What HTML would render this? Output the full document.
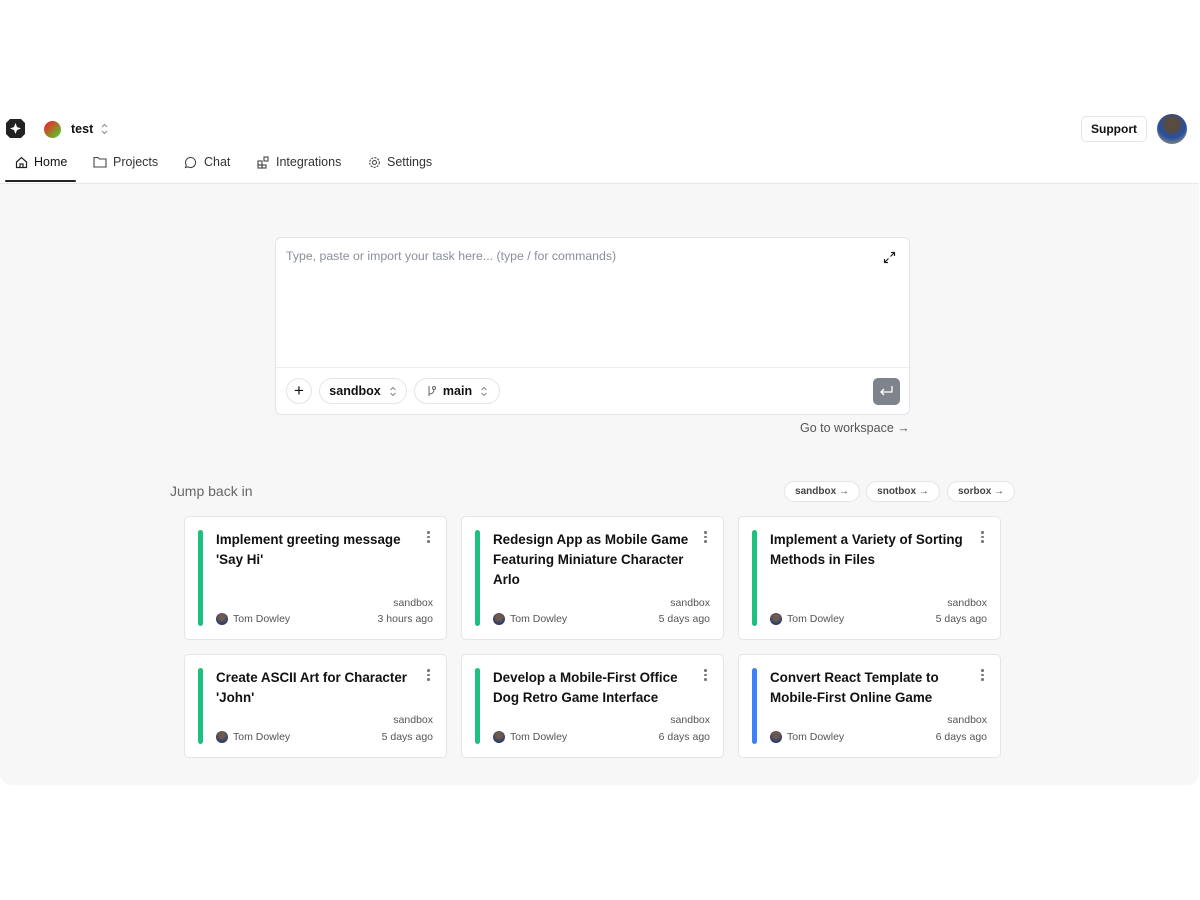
<!DOCTYPE html>
<html><head><meta charset="utf-8"><style>
*{box-sizing:border-box;margin:0;padding:0}
body{width:1200px;height:900px;background:#fff;font-family:"Liberation Sans",sans-serif;color:#111;position:relative;overflow:hidden}
.abs{position:absolute}
.nav span{position:absolute;top:155px;font-size:12.5px;color:#333}
.gray{left:0;top:183px;width:1199px;height:602px;background:#f7f7f7;border-top:1px solid #e5e7eb;border-radius:0 0 12px 12px}
.box{left:275px;top:237px;width:635px;height:178px;background:#fff;border:1px solid #e2e5ea;border-radius:6px}
.pill{position:absolute;height:26px;border:1px solid #e2e5ea;border-radius:13px;background:#fff;font-size:12.5px;font-weight:bold;display:flex;align-items:center;justify-content:center;color:#111}
.chip{position:absolute;top:481px;height:21px;border:1px solid #e2e5ea;border-radius:11px;background:#fff;font-size:10px;font-weight:bold;color:#444;display:flex;align-items:center;justify-content:center}
.card{position:absolute;width:263px;background:#fff;border:1px solid #e2e5ea;border-radius:5px}
.bar{position:absolute;left:13px;top:13px;bottom:13px;width:5px;border-radius:3px;background:#1fbf7f}
.t{position:absolute;left:31px;top:13px;width:212px;font-size:13.4px;font-weight:bold;line-height:20px;color:#111}
.dots{position:absolute;right:16px;top:14px;width:3px}
.dots i{display:block;width:2.5px;height:2.5px;border-radius:50%;background:#777;margin-bottom:2px}
.sb{position:absolute;right:13px;font-size:10.5px;color:#555}
.au{position:absolute;left:31px;font-size:10.5px;color:#555;display:flex;align-items:center}
.au b{display:inline-block;width:12px;height:12px;border-radius:50%;background:radial-gradient(circle at 50% 35%,#6b5a50 30%,#2a3a6a 70%);margin-right:5px}
.ago{position:absolute;right:13px;font-size:10.5px;color:#555}
</style></head><body>
<svg class="abs" style="left:6px;top:119px" width="19" height="19" viewBox="0 0 19 19"><path d="M4 0H15L19 4V15L15 19H4L0 15V4Z" fill="#222"/><path d="M9.5 4L11 8L15 9.5L11 11L9.5 15L8 11L4 9.5L8 8Z" fill="#fff"/></svg>
<div class="abs" style="left:44px;top:121px;width:17px;height:17px;border-radius:50%;background:linear-gradient(135deg,#e0362a 20%,#5cc12a 85%)"></div>
<div class="abs" style="left:71px;top:122px;font-size:12.5px;font-weight:bold">test</div>
<svg class="abs" style="left:100px;top:123px" width="9" height="12" viewBox="0 0 9 12"><path d="M2 4L4.5 1.5L7 4M2 8L4.5 10.5L7 8" fill="none" stroke="#888" stroke-width="1"/></svg>
<div class="abs" style="left:1081px;top:116px;width:66px;height:26px;border:1px solid #e2e5ea;border-radius:5px;font-size:12px;font-weight:bold;display:flex;align-items:center;justify-content:center">Support</div>
<div class="abs" style="left:1157px;top:114px;width:30px;height:30px;border-radius:50%;background:radial-gradient(circle at 50% 35%,#5a4a40 25%,#2550a8 55%,#707a80 75%)"></div>
<div class="nav">
<svg class="abs" style="left:15px;top:156px" width="13" height="13" viewBox="0 0 13 13" fill="none" stroke="#222" stroke-width="1.2"><path d="M1.5 6L6.5 1.5L11.5 6V11.5H1.5Z M5 11.5V8H8V11.5"/></svg>
<span style="left:34px;color:#111">Home</span>
<svg class="abs" style="left:93px;top:156px" width="14" height="12" viewBox="0 0 14 12" fill="none" stroke="#444" stroke-width="1.1"><path d="M1 1.5H5L6.5 3H13V11H1Z"/></svg>
<span style="left:113px">Projects</span>
<svg class="abs" style="left:184px;top:156px" width="13" height="13" viewBox="0 0 13 13" fill="none" stroke="#444" stroke-width="1.1"><path d="M6.5 1.5A5 5 0 1 1 4 10.8L1.5 11.5L2.2 9A5 5 0 0 1 6.5 1.5Z"/></svg>
<span style="left:204px">Chat</span>
<svg class="abs" style="left:257px;top:156px" width="13" height="13" viewBox="0 0 13 13" fill="none" stroke="#444" stroke-width="1.1"><rect x="1" y="5" width="4" height="4"/><rect x="1" y="9" width="4" height="3"/><rect x="5" y="9" width="4" height="3"/><rect x="7" y="1" width="4" height="4"/></svg>
<span style="left:276px">Integrations</span>
<svg class="abs" style="left:368px;top:156px" width="13" height="13" viewBox="0 0 13 13" fill="none" stroke="#444" stroke-width="1.1"><circle cx="6.5" cy="6.5" r="2"/><circle cx="6.5" cy="6.5" r="4.8" stroke-dasharray="2 1.2"/></svg>
<span style="left:387px">Settings</span>
</div>
<div class="abs" style="left:5px;top:180px;width:71px;height:2px;background:#222;border-radius:1px"></div>
<div class="abs gray"></div>
<div class="abs box">
<div class="abs" style="left:10px;top:11px;font-size:12.3px;color:#8a8f98">Type, paste or import your task here... (type / for commands)</div>
<svg class="abs" style="left:607px;top:13px" width="13" height="13" viewBox="0 0 13 13" fill="none" stroke="#222" stroke-width="1.2"><path d="M8 1.5H11.5V5M11.5 1.5L7.5 5.5M5 11.5H1.5V8M1.5 11.5L5.5 7.5"/></svg>
<div class="abs" style="left:0;top:129px;width:633px;height:1px;background:#eceef1"></div>
<div class="pill" style="left:10px;top:140px;width:26px;font-weight:normal;font-size:17px">+</div>
<div class="pill" style="left:43px;top:140px;width:88px">sandbox <svg style="margin-left:8px" width="8" height="11" viewBox="0 0 8 11"><path d="M1.5 4L4 1.5L6.5 4M1.5 7L4 9.5L6.5 7" fill="none" stroke="#888"/></svg></div>
<div class="pill" style="left:138px;top:140px;width:86px"><svg style="margin-right:6px" width="11" height="12" viewBox="0 0 11 12" fill="none" stroke="#666"><path d="M3 1V11M3 9C7 9 8 7 8 4"/><circle cx="8" cy="3" r="1.5"/></svg>main <svg style="margin-left:8px" width="8" height="11" viewBox="0 0 8 11"><path d="M1.5 4L4 1.5L6.5 4M1.5 7L4 9.5L6.5 7" fill="none" stroke="#888"/></svg></div>
<div class="abs" style="left:597px;top:140px;width:27px;height:27px;border-radius:5px;background:#7f848c"><svg style="position:absolute;left:6px;top:7px" width="15" height="13" viewBox="0 0 15 13" fill="none" stroke="#fff" stroke-width="1.3"><path d="M13 1V7H2M5 4L2 7L5 10"/></svg></div>
</div>
<div class="abs" style="left:800px;top:421px;font-size:12.5px;color:#555">Go to workspace →</div>
<div class="abs" style="left:170px;top:483px;font-size:14px;color:#666">Jump back in</div>
<div class="chip" style="left:784px;width:76px">sandbox →</div>
<div class="chip" style="left:866px;width:74px">snotbox →</div>
<div class="chip" style="left:947px;width:68px">sorbox →</div>

<div class="card" style="left:184px;top:516px;height:124px"><div class="bar"></div><div class="t">Implement greeting message 'Say Hi'</div><div class="dots"><i></i><i></i><i></i></div><div class="sb" style="top:80px">sandbox</div><div class="au" style="top:96px"><b></b>Tom Dowley</div><div class="ago" style="top:96px">3 hours ago</div></div>
<div class="card" style="left:461px;top:516px;height:124px"><div class="bar"></div><div class="t">Redesign App as Mobile Game Featuring Miniature Character Arlo</div><div class="dots"><i></i><i></i><i></i></div><div class="sb" style="top:80px">sandbox</div><div class="au" style="top:96px"><b></b>Tom Dowley</div><div class="ago" style="top:96px">5 days ago</div></div>
<div class="card" style="left:738px;top:516px;height:124px"><div class="bar"></div><div class="t">Implement a Variety of Sorting Methods in Files</div><div class="dots"><i></i><i></i><i></i></div><div class="sb" style="top:80px">sandbox</div><div class="au" style="top:96px"><b></b>Tom Dowley</div><div class="ago" style="top:96px">5 days ago</div></div>

<div class="card" style="left:184px;top:654px;height:104px"><div class="bar"></div><div class="t">Create ASCII Art for Character 'John'</div><div class="dots"><i></i><i></i><i></i></div><div class="sb" style="top:59px">sandbox</div><div class="au" style="top:76px"><b></b>Tom Dowley</div><div class="ago" style="top:76px">5 days ago</div></div>
<div class="card" style="left:461px;top:654px;height:104px"><div class="bar"></div><div class="t">Develop a Mobile-First Office Dog Retro Game Interface</div><div class="dots"><i></i><i></i><i></i></div><div class="sb" style="top:59px">sandbox</div><div class="au" style="top:76px"><b></b>Tom Dowley</div><div class="ago" style="top:76px">6 days ago</div></div>
<div class="card" style="left:738px;top:654px;height:104px"><div class="bar" style="background:#3b82f6"></div><div class="t">Convert React Template to Mobile-First Online Game</div><div class="dots"><i></i><i></i><i></i></div><div class="sb" style="top:59px">sandbox</div><div class="au" style="top:76px"><b></b>Tom Dowley</div><div class="ago" style="top:76px">6 days ago</div></div>
</body></html>
